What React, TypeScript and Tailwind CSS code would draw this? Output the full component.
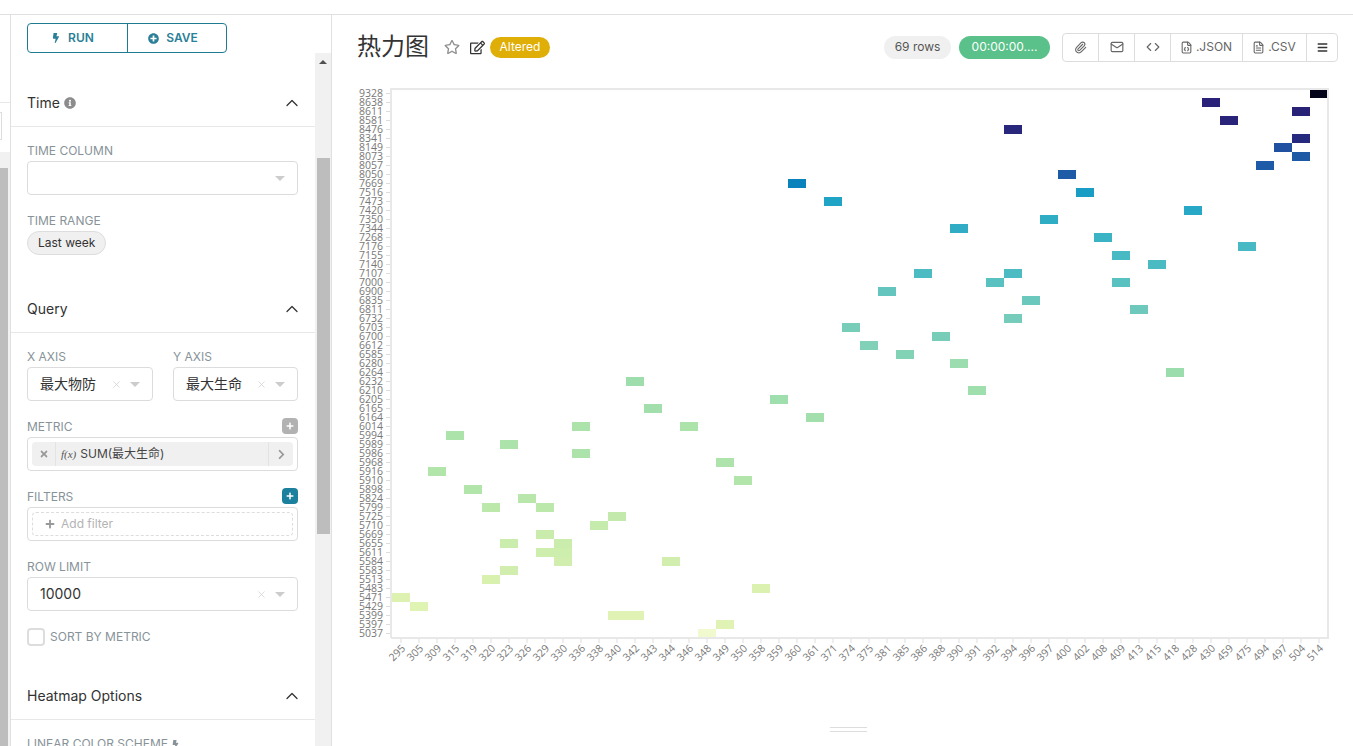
import { ChevronUp, Code, FileJson, FileText, Mail, Paperclip, X } from 'lucide-react';
import { FaBars, FaBolt, FaInfoCircle, FaPlus, FaPlusCircle, FaRegEdit, FaRegStar, FaTimes, FaChevronRight } from 'react-icons/fa';

const xLabels = [295, 305, 309, 315, 319, 320, 323, 326, 329, 330, 336, 338, 340, 342, 343, 344, 346, 348, 349, 350, 358, 359, 360, 361, 371, 374, 375, 381, 385, 386, 388, 390, 391, 392, 394, 396, 397, 400, 402, 408, 409, 413, 415, 418, 428, 430, 459, 475, 494, 497, 504, 514];
const yLabels = [9328, 8638, 8611, 8581, 8476, 8341, 8149, 8073, 8057, 8050, 7669, 7516, 7473, 7420, 7350, 7344, 7268, 7176, 7155, 7140, 7107, 7000, 6900, 6835, 6811, 6732, 6703, 6700, 6612, 6585, 6280, 6264, 6232, 6210, 6205, 6165, 6164, 6014, 5994, 5989, 5986, 5968, 5916, 5910, 5898, 5824, 5799, 5725, 5710, 5669, 5655, 5611, 5584, 5583, 5513, 5483, 5471, 5429, 5399, 5397, 5037];

// column index for each row, top to bottom
const cells: number[][] = [
  [51], [45], [50], [46], [34], [50], [49], [50], [48], [37], [22], [38], [24], [44], [36], [31], [39], [47], [40], [42],
  [29, 34], [33, 40], [27], [35], [41], [34], [25], [30], [26], [28], [31], [43], [13], [32], [21], [14], [23], [10, 16],
  [3], [6], [10], [18], [2], [19], [4], [7], [5, 8], [12], [11], [8], [6, 9], [8, 9], [9, 15], [6], [5], [20], [0], [1],
  [12, 13], [18], [17],
];

const stops: [number, string][] = [
  [0, '#f1f9cf'], [0.1, '#ddf2b0'], [0.2, '#b2e5aa'], [0.3, '#98dcae'], [0.4, '#74cbbb'],
  [0.5, '#45b9c4'], [0.57, '#1ea3c6'], [0.613, '#0a82bc'], [0.7, '#1d5ca8'], [0.73, '#204fa0'], [0.77, '#262a7e'], [0.87, '#2b1f75'], [1, '#03041a'],
];

function heatColor(value: number) {
  const t = (value - 5037) / (9328 - 5037);
  for (let i = 1; i < stops.length; i++) {
    if (t <= stops[i][0]) {
      const [t0, c0] = stops[i - 1];
      const [t1, c1] = stops[i];
      const k = (t - t0) / (t1 - t0);
      const ch = (c: string, p: number) => parseInt(c.slice(p, p + 2), 16);
      const mix = (p: number) => Math.round(ch(c0, p) + (ch(c1, p) - ch(c0, p)) * k);
      return `rgb(${mix(1)},${mix(3)},${mix(5)})`;
    }
  }
  return stops[stops.length - 1][1];
}

function Label({ children }: { children: React.ReactNode }) {
  return <div className="h-4 mb-[3px] text-xs leading-[18px] text-[#879399] whitespace-nowrap">{children}</div>;
}

function SectionHeader({ children }: { children: React.ReactNode }) {
  return (
    <div className="h-[47px] border-b border-[#e8e8e8] flex items-center justify-between pl-4 pr-[13px] text-sm text-[#323232]">
      <div className="flex items-center gap-1">{children}</div>
      <ChevronUp size={20} strokeWidth={1.5} className="text-[#333]" />
    </div>
  );
}

function Select({ value, clear = true, className = '' }: { value?: string; clear?: boolean; className?: string }) {
  return (
    <div className={`h-[34px] border border-[#dcdcdc] rounded flex items-center pl-3 pr-3 text-sm text-[#333] bg-white ${className}`}>
      <span className="flex-1 truncate">{value}</span>
      {clear && <X size={11} strokeWidth={1.5} className="text-[#ccc] mr-2" />}
      <span className="w-0 h-0 border-x-[5px] border-x-transparent border-t-[5px] border-t-[#ccc]" />
    </div>
  );
}

function AddBox({ active = false }: { active?: boolean }) {
  return (
    <span className={`w-4 h-4 rounded-sm flex items-center justify-center text-white ${active ? 'bg-[#1b7f9e]' : 'bg-[#b2b2b2]'}`}>
      <FaPlus size={8} />
    </span>
  );
}

function Chart() {
  return (
    <svg viewBox="345 80 1000 620" className="block mt-px ml-[13px] w-[1000px] h-[620px] font-['Open_Sans',sans-serif] text-[10.5px] fill-[#777]">
      {cells.map((cols, row) =>
        cols.map((col) => (
          <rect key={`${row}-${col}`} x={392 + col * 18} y={89 + row * 9} width={18} height={9} fill={heatColor(yLabels[row])} />
        )),
      )}
      <path d="M391 638V89H1328V638H391" fill="none" stroke="#e8e8e8" strokeWidth={2} />
      {yLabels.map((label, i) => (
        <g key={label}>
          <line x1={386} x2={390} y1={93.5 + i * 9} y2={93.5 + i * 9} stroke="#ddd" />
          <text x={383} y={97 + i * 9} textAnchor="end">{label}</text>
        </g>
      ))}
      {xLabels.map((label, i) => (
        <g key={label}>
          <line x1={401 + i * 18} x2={401 + i * 18} y1={639} y2={643} stroke="#ddd" />
          <text transform={`translate(${406 + i * 18} 649) rotate(-45)`} textAnchor="end">{label}</text>
        </g>
      ))}
    </svg>
  );
}

export default function App() {
  return (
    <div className="h-screen overflow-hidden bg-white font-['Inter','Noto_Sans_CJK_SC',sans-serif]">
      <div className="h-[15px] border-b border-[#e0e0e0]" />
      <div className="flex h-[731px]">
        {/* collapsed datasource column */}
        <div className="w-[11px] shrink-0 border-r border-[#e0e0e0] flex flex-col">
          <div className="h-[88px] border-b border-[#e8e8e8] shrink-0" />
          <div className="h-[28px] mt-[9px] w-[2px] border-r border-y border-[#ddd] shrink-0" />
          <div className="flex-1 bg-[#f1f1f1] mt-3 flex flex-col">
            <div className="h-4 shrink-0" />
            <div className="flex-1 w-2 bg-[#bdbdbd]" />
          </div>
        </div>

        {/* control panel */}
        <div className="w-[321px] shrink-0 border-r border-[#e0e0e0] flex flex-col">
          <div className="h-[38px] shrink-0 pl-4 pt-2">
            <div className="w-[200px] h-[30px] flex border border-[#1f7a94] rounded text-[#2b7f98] text-xs font-semibold">
              <div className="w-[100px] pr-[10px] border-r border-[#1f7a94] flex items-center justify-center gap-[7px]">
                <FaBolt size={10} />
                RUN
              </div>
              <div className="flex-1 pr-2 flex items-center justify-center gap-[7px]">
                <FaPlusCircle size={11} />
                SAVE
              </div>
            </div>
          </div>

          <div className="flex-1 flex min-h-0">
            <div className="w-[304px] shrink-0 pt-[27px] overflow-hidden">
              <SectionHeader>
                Time
                <FaInfoCircle size={12} className="text-[#8c8c8c]" />
              </SectionHeader>
              <div className="pl-4 pr-[17px] pt-[15px] pb-[31px] flex flex-col gap-[17px]">
                <div>
                  <Label>TIME COLUMN</Label>
                  <Select clear={false} />
                </div>
                <div>
                  <Label>TIME RANGE</Label>
                  <span className="flex w-fit items-center h-6 px-[10px] rounded-full bg-[#f0f0f0] border border-[#ddd] text-xs text-[#333]">Last week</span>
                </div>
              </div>

              <SectionHeader>Query</SectionHeader>
              <div className="pl-4 pr-[17px] pt-[15px] pb-[27px] flex flex-col gap-[17px]">
                <div className="flex gap-5">
                  <div className="w-[126px]">
                    <Label>X AXIS</Label>
                    <Select value="最大物防" />
                  </div>
                  <div className="w-[125px]">
                    <Label>Y AXIS</Label>
                    <Select value="最大生命" />
                  </div>
                </div>
                <div>
                  <div className="flex justify-between items-start h-[19px]">
                    <Label>METRIC</Label>
                    <AddBox />
                  </div>
                  <div className="h-[34px] border border-[#dcdcdc] rounded px-1 flex items-center">
                    <div className="w-full h-6 rounded bg-[#f0f0f0] flex items-center text-xs text-[#444]">
                      <div className="w-6 h-full flex items-center justify-center border-r border-[#e3e3e3] text-[#999]">
                        <FaTimes size={10} />
                      </div>
                      <span className="ml-[5px] mr-1 text-[11px] italic text-[#555] font-['Liberation_Serif',serif]">f(x)</span>
                      <span className="flex-1">SUM(最大生命)</span>
                      <div className="w-[25px] h-full flex items-center justify-center border-l border-[#e3e3e3] text-[#999]">
                        <FaChevronRight size={11} />
                      </div>
                    </div>
                  </div>
                </div>
                <div>
                  <div className="flex justify-between items-start h-[19px]">
                    <Label>FILTERS</Label>
                    <AddBox active />
                  </div>
                  <div className="h-[34px] border border-[#dcdcdc] rounded px-1 flex items-center">
                    <div className="w-full h-6 rounded border border-dashed border-[#ddd] flex items-center pl-3 gap-[6px] text-xs text-[#b3b3b3]">
                      <FaPlus size={10} className="text-[#999]" />
                      Add filter
                    </div>
                  </div>
                </div>
                <div>
                  <Label>ROW LIMIT</Label>
                  <Select value="10000" />
                </div>
                <div className="flex items-center gap-[5px] h-[18px]">
                  <span className="w-[18px] h-[18px] rounded-sm border-2 border-[#ddd]" />
                  <span className="text-xs text-[#879399]">SORT BY METRIC</span>
                </div>
              </div>

              <SectionHeader>Heatmap Options</SectionHeader>
              <div className="px-4 pt-[15px]">
                <Label>
                  <span className="inline-flex items-center gap-[3px]">
                    LINEAR COLOR SCHEME
                    <FaBolt size={9} />
                  </span>
                </Label>
              </div>
            </div>

            {/* panel scrollbar */}
            <div className="w-4 shrink-0 bg-[#f1f1f1] flex flex-col items-center pt-[7px]">
              <span className="w-0 h-0 border-x-[4px] border-x-transparent border-b-[4px] border-b-[#505050]" />
              <div className="w-[13px] h-[376px] bg-[#bdbdbd] mt-[94px]" />
            </div>
          </div>
        </div>

        {/* chart area */}
        <div className="flex-1 min-w-0">
          <div className="h-[64px] flex items-center pl-[25px] pr-[15px]">
            <h1 className="text-2xl text-[#333] mr-[15px]">热力图</h1>
            <FaRegStar size={16} className="text-[#8f8f8f] mr-[10px]" />
            <FaRegEdit size={15} className="text-[#333] mr-[5px]" />
            <span className="h-[21px] w-[60px] rounded-full bg-[#dfae07] text-white text-xs flex items-center justify-center">Altered</span>
            <div className="ml-auto flex items-center">
              <span className="h-[23px] w-[67px] rounded-full bg-[#f0f0f0] text-xs text-[#555] flex items-center justify-center mr-2">69 rows</span>
              <span className="h-[23px] w-[91px] rounded-full bg-[#59c189] text-xs text-white flex items-center justify-center mr-3">00:00:00....</span>
              <div className="h-[29px] flex border border-[#ddd] rounded text-xs text-[#666] divide-x divide-[#ddd]">
                <div className="w-9 flex items-center justify-center"><Paperclip size={13} /></div>
                <div className="w-9 flex items-center justify-center"><Mail size={14} /></div>
                <div className="w-9 flex items-center justify-center"><Code size={14} /></div>
                <div className="w-[72px] pr-px flex items-center justify-center gap-[3px]"><FileJson size={13} />.JSON</div>
                <div className="w-16 pr-px flex items-center justify-center gap-[3px]"><FileText size={13} />.CSV</div>
                <div className="w-[30px] flex items-center justify-center text-[#333]"><FaBars size={11} /></div>
              </div>
            </div>
          </div>
          <Chart />
          <div className="ml-[498px] mt-[27px] w-[37px] h-[5px] border-y border-[#ddd]" />
        </div>
      </div>
    </div>
  );
}
